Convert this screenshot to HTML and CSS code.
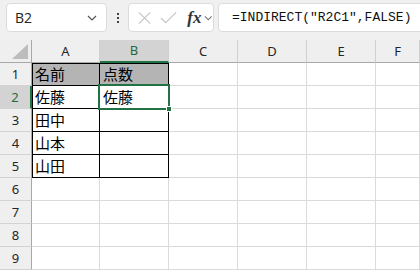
FILE: index.html
```html
<!DOCTYPE html>
<html lang="ja">
<head>
    <meta charset="UTF-8">
    <title>INDIRECT</title>
    <link rel="stylesheet" href="styles.css">
</head>
<body>
    <!-- formula bar -->
    <div class="topbar">
        <div class="namebox">
            <span>B2</span>
            <svg class="chev" width="10" height="6" viewBox="0 0 10 6"><path d="M1 1l4 4 4-4" fill="none" stroke="#555" stroke-width="1.2"/></svg>
        </div>
        <div class="dots"><i></i><i></i><i></i></div>
        <div class="iconbox">
            <svg width="16" height="16" viewBox="0 0 16 16"><path d="M2 2l12 12M14 2L2 14" stroke="#c4c4c4" stroke-width="1.2"/></svg>
            <svg width="18" height="14" viewBox="0 0 18 14"><path d="M1 7l5 5L17 1" fill="none" stroke="#c4c4c4" stroke-width="1.2"/></svg>
            <span class="fx">fx</span>
            <svg class="chev" width="9" height="6" viewBox="0 0 10 6"><path d="M1 1l4 4 4-4" fill="none" stroke="#777" stroke-width="1.2"/></svg>
        </div>
        <div class="formula">=INDIRECT("R2C1",FALSE)</div>
    </div>

    <!-- sheet grid -->
    <div class="sheet">
        <div class="corner"><span class="tri"></span></div>
        <div class="colhead">A</div>
        <div class="colhead sel">B</div>
        <div class="colhead">C</div>
        <div class="colhead">D</div>
        <div class="colhead">E</div>
        <div class="colhead">F</div>

        <div class="rowhead">1</div>
        <div class="cell box head left top">名前</div>
        <div class="cell box head top">点数</div>
        <div class="cell"></div><div class="cell"></div><div class="cell"></div><div class="cell"></div>

        <div class="rowhead sel">2</div>
        <div class="cell box left">佐藤</div>
        <div class="cell box active">佐藤</div>
        <div class="cell"></div><div class="cell"></div><div class="cell"></div><div class="cell"></div>

        <div class="rowhead">3</div>
        <div class="cell box left">田中</div>
        <div class="cell box"></div>
        <div class="cell"></div><div class="cell"></div><div class="cell"></div><div class="cell"></div>

        <div class="rowhead">4</div>
        <div class="cell box left">山本</div>
        <div class="cell box"></div>
        <div class="cell"></div><div class="cell"></div><div class="cell"></div><div class="cell"></div>

        <div class="rowhead">5</div>
        <div class="cell box left">山田</div>
        <div class="cell box"></div>
        <div class="cell"></div><div class="cell"></div><div class="cell"></div><div class="cell"></div>

        <div class="rowhead">6</div>
        <div class="cell"></div><div class="cell"></div><div class="cell"></div><div class="cell"></div><div class="cell"></div><div class="cell"></div>
        <div class="rowhead">7</div>
        <div class="cell"></div><div class="cell"></div><div class="cell"></div><div class="cell"></div><div class="cell"></div><div class="cell"></div>
        <div class="rowhead">8</div>
        <div class="cell"></div><div class="cell"></div><div class="cell"></div><div class="cell"></div><div class="cell"></div><div class="cell"></div>
        <div class="rowhead">9</div>
        <div class="cell"></div><div class="cell"></div><div class="cell"></div><div class="cell"></div><div class="cell"></div><div class="cell"></div>
    </div>
</body>
</html>
```

FILE: styles.css
```css
body {
    margin: 0;
    width: 420px;
    height: 270px;
    overflow: hidden;
    background: #fff;
    font-family: "Noto Sans", "Noto Sans CJK JP", sans-serif;
}
.topbar {
    height: 40px;
    background: #f0f0f0;
    display: flex;
    align-items: flex-start;
    padding-top: 3px;
    box-sizing: border-box;
    overflow: hidden;
}
.namebox, .iconbox, .formula {
    height: 29px;
    box-sizing: border-box;
    background: #fff;
    border: 1px solid #dcdcdc;
    border-radius: 4px;
    display: flex;
    align-items: center;
    flex-shrink: 0;
}
.namebox {
    margin-left: 6px;
    width: 101px;
    padding: 0 9px 0 8px;
    justify-content: space-between;
    font-family: "Open Sans", "Noto Sans", sans-serif;
    font-size: 14px;
    color: #222;
}
.dots {
    width: 21px;
    height: 29px;
    flex-shrink: 0;
    display: flex;
    flex-direction: column;
    align-items: center;
    justify-content: center;
    gap: 2px;
}
.dots i {
    display: block;
    width: 2px;
    height: 2px;
    background: #444;
}
.iconbox {
    width: 86px;
    padding-left: 8px;
    gap: 8px;
}
.fx {
    font-family: "Liberation Serif", serif;
    font-style: italic;
    font-weight: bold;
    font-size: 17px;
    color: #333;
    margin-left: 2px;
    margin-right: -5px;
}
.formula {
    margin-left: 4px;
    width: 240px;
    padding-left: 13px;
    font-family: "Liberation Mono", monospace;
    font-size: 13px;
    color: #111;
}
.sheet {
    display: grid;
    grid-template-columns: 32px 68px 69px 69px 69px 69px 1fr;
    grid-auto-rows: 23px;
}
.sheet > div {
    box-sizing: border-box;
    border-right: 1px solid #dadada;
    border-bottom: 1px solid #dadada;
}
.corner {
    background: #efefef;
    position: relative;
    border-right-color: #a8a8a8 !important;
    border-bottom-color: #a8a8a8 !important;
}
.tri {
    position: absolute;
    right: 3px;
    bottom: 3px;
    width: 0;
    height: 0;
    border-left: 16px solid transparent;
    border-bottom: 15px solid #bdbdbd;
}
.colhead {
    background: #efefef;
    border-bottom-color: #a8a8a8 !important;
    border-right-color: #cfcfcf !important;
    text-align: center;
    font-size: 13px;
    line-height: 22px;
    color: #262626;
}
.colhead.sel {
    background: #d3d3d3;
    color: #1e6b40;
    border-bottom: 2px solid #217346 !important;
    line-height: 21px;
}
.rowhead {
    background: #efefef;
    border-right-color: #a8a8a8 !important;
    border-bottom-color: #d3d3d3 !important;
    text-align: center;
    font-size: 13px;
    line-height: 22px;
    color: #262626;
}
.rowhead.sel {
    background: #d3d3d3;
    color: #1e6b40;
    border-right: 2px solid #217346 !important;
}
.cell {
    font-family: "Noto Sans CJK JP", sans-serif;
    font-size: 15px;
    line-height: 22px;
    padding-left: 3px;
    color: #000;
}
.cell.box {
    border-right-color: #000;
    border-bottom-color: #000;
}
.cell.left {
    box-shadow: inset 1px 0 0 #000;
}
.cell.top {
    box-shadow: inset 0 1px 0 #000;
}
.cell.left.top {
    box-shadow: inset 1px 1px 0 #000;
}
.cell.head {
    background: #b4b4b4;
}
.cell.active {
    position: relative;
}
.cell.active::after {
    content: "";
    position: absolute;
    left: -2px;
    top: -2px;
    right: -2px;
    bottom: -2px;
    border: 2px solid #217346;
}
.cell.active::before {
    content: "";
    position: absolute;
    right: -4px;
    bottom: -4px;
    width: 6px;
    height: 6px;
    background: #217346;
    border: 1px solid #fff;
    box-sizing: border-box;
    z-index: 1;
}
```
